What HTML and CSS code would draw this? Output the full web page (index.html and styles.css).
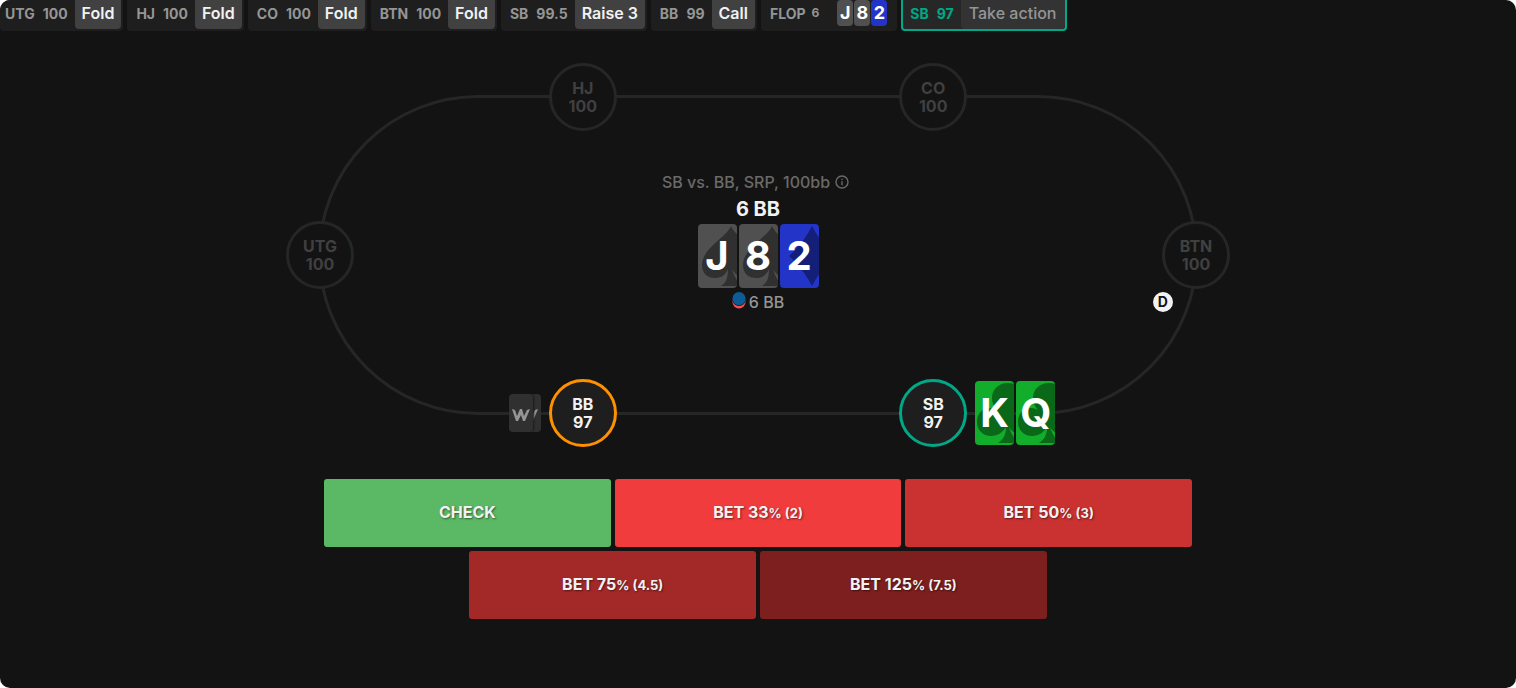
FILE: index.html
```html
<!DOCTYPE html>
<html lang="en">
<head>
<meta charset="utf-8">
<title>Poker trainer</title>
<link rel="stylesheet" href="styles.css">
</head>
<body>
<svg class="symbols" aria-hidden="true">
  <symbol id="spade" viewBox="0 0 39 64" preserveAspectRatio="none">
    <path d="M33 2C29 13 4 24 4 41C4 50 10 54 17 54C24 54 28 50 30 45C30 54 28 59 23 62H45C39 58 36 52 34 45C37 50 41 54 48 54C56 54 62 50 62 41C62 24 37 13 33 2Z"/>
  </symbol>
  <symbol id="diamond" viewBox="0 0 39 64" preserveAspectRatio="none">
    <path d="M32 2C26 14 17 25 9 32C17 39 26 50 32 62C38 50 47 39 55 32C47 25 38 14 32 2Z"/>
  </symbol>
  <symbol id="club" viewBox="0 0 39 64" preserveAspectRatio="none">
    <path d="M33 2C23 2 17 9 17 17C17 22 19 26 22 29C20 28 18 27 15 27C7 27 2 33 2 41C2 49 8 55 16 55C23 55 28 51 31 46C31 54 28 59 23 62H44C39 58 36 52 34 46C37 51 43 55 50 55C58 55 64 49 64 41C64 33 58 27 51 27C48 27 46 28 44 29C47 26 49 22 49 17C49 9 43 2 33 2Z"/>
  </symbol>
  <symbol id="logo" viewBox="0 0 18 12">
    <path d="M0 0L3 1L5 7L8 0H10L12 7L15 1L18 0L13 12H11L9 6L6 12H4Z"/>
  </symbol>
</svg>
<main class="app">
  <nav class="history" aria-label="Hand history">
    <div class="step step-first"><span class="pos">UTG</span><span class="stack">100</span><button class="act">Fold</button></div>
    <div class="step"><span class="pos">HJ</span><span class="stack">100</span><button class="act">Fold</button></div>
    <div class="step"><span class="pos">CO</span><span class="stack">100</span><button class="act">Fold</button></div>
    <div class="step"><span class="pos">BTN</span><span class="stack">100</span><button class="act">Fold</button></div>
    <div class="step"><span class="pos">SB</span><span class="stack">99.5</span><button class="act">Raise 3</button></div>
    <div class="step"><span class="pos">BB</span><span class="stack">99</span><button class="act">Call</button></div>
    <div class="step step-flop"><span class="pos">FLOP</span><span class="pot-size">6</span>
      <span class="mini-cards"><span class="mini">J</span><span class="mini">8</span><span class="mini mini-blue">2</span></span>
    </div>
    <div class="step step-active"><span class="pos">SB</span><span class="stack">97</span><button class="act">Take action</button></div>
  </nav>

  <section class="table" aria-label="Table">
    <div class="felt"></div>
    <div class="center">
      <p class="spot">SB vs. BB, SRP, 100bb
        <svg class="info" viewBox="0 0 14 14" aria-hidden="true"><circle cx="7" cy="7" r="6"/><path d="M7 6.3V10.2M7 3.8V5.1"/></svg>
      </p>
      <p class="pot">6 BB</p>
      <div class="cards">
        <div class="card gray"><svg class="suit" aria-hidden="true"><use href="#spade"/></svg><span class="rank">J</span></div>
        <div class="card gray"><svg class="suit" aria-hidden="true"><use href="#spade"/></svg><span class="rank">8</span></div>
        <div class="card blue"><svg class="suit" aria-hidden="true"><use href="#diamond"/></svg><span class="rank">2</span></div>
      </div>
      <p class="chips">
        <svg class="chip" viewBox="0 0 14 20" aria-hidden="true"><circle cx="7" cy="9.8" r="6.6" fill="#f9504f"/><circle cx="7" cy="7.2" r="6.8" fill="#131313"/><circle cx="7" cy="6.7" r="6.6" fill="#0d5c96"/></svg>
        6 BB
      </p>
    </div>
    <div class="seat hj">HJ<br>100</div>
    <div class="seat co">CO<br>100</div>
    <div class="seat utg">UTG<br>100</div>
    <div class="seat btn">BTN<br>100</div>
    <div class="seat bb">BB<br>97
      <div class="hidden-cards">
        <div class="back"><svg class="mark" aria-hidden="true"><use href="#logo"/></svg></div>
        <div class="back back-under"><svg class="mark" aria-hidden="true"><use href="#logo"/></svg></div>
      </div>
    </div>
    <div class="seat sb">SB<br>97
      <div class="cards hand">
        <div class="card green"><svg class="suit" aria-hidden="true"><use href="#club"/></svg><span class="rank">K</span></div>
        <div class="card green"><svg class="suit" aria-hidden="true"><use href="#club"/></svg><span class="rank">Q</span></div>
      </div>
    </div>
    <div class="dealer">D</div>
  </section>

  <section class="actions" aria-label="Actions">
    <button class="bet check">CHECK</button>
    <button class="bet bet-33">BET 33<small>% (2)</small></button>
    <button class="bet bet-50">BET 50<small>% (3)</small></button>
    <button class="bet bet-75">BET 75<small>% (4.5)</small></button>
    <button class="bet bet-125">BET 125<small>% (7.5)</small></button>
  </section>
</main>
</body>
</html>
```
FILE: styles.css
```css
* { box-sizing: border-box; }
html { background: #fff; }
body { margin: 0; font-family: Inter, "Liberation Sans", sans-serif; color: #f2f2f2; }
p { margin: 0; }
button { font-family: inherit; border: 0; margin: 0; cursor: pointer; }
.symbols { position: absolute; width: 0; height: 0; }

.app {
  min-height: 100vh;
  background: #131313;
  border-radius: 10px;
  overflow: hidden;
}

/* Hand history */
.history { display: flex; gap: 4px; align-items: flex-start; }
.step {
  display: flex;
  align-items: center;
  height: 31px;
  padding: 0 2px 2px 9px;
  background: #1e1e1e;
  border-radius: 0 0 4px 4px;
  color: #959595;
  font-size: 14px;
  font-weight: 700;
  line-height: 18px;
  white-space: nowrap;
}
.step-first { padding-left: 5px; }
.pos, .stack { padding-bottom: 2px; }
.pos { margin-right: 8px; }
.stack { margin-right: 7px; }
.act {
  height: 29px;
  padding: 0 7px 3px;
  border-radius: 0 0 4px 4px;
  background: #414141;
  color: #f2f2f2;
  font-size: 16px;
  font-weight: 600;
}
.step-flop { padding-right: 10px; }
.step-flop .pos { margin-right: 6px; }
.pot-size { font-size: 12px; padding-bottom: 4px; }
.mini-cards { display: flex; gap: 1px; align-self: flex-start; margin-left: 18px; }
.mini {
  width: 16px;
  height: 26px;
  border-radius: 4px;
  background: #505050;
  color: #fff;
  font-size: 18px;
  font-weight: 700;
  line-height: 26px;
  text-align: center;
}
.mini-blue { background: #2334c8; }
.step-active {
  padding: 0 0 0 7px;
  border: 2px solid #00a887;
  border-top: 0;
  background: #272727;
  color: #00a887;
}
.step-active .act { background: #333; color: #959595; font-weight: 500; padding: 0 9px 3px 8px; }

/* Table */
.table {
  position: relative;
  display: flex;
  justify-content: center;
  align-items: center;
  width: 90%;
  max-width: 876px;
  min-height: 316px;
  margin: 66px auto;
  padding-bottom: 26px;
}
.felt { position: absolute; inset: -2px; border: 3px solid #262626; border-radius: 160px; }
.center { display: flex; flex-direction: column; align-items: center; }
.spot { display: flex; align-items: center; gap: 5px; padding-right: 5px; line-height: 24px; font-size: 16px; font-weight: 500; color: #6a6a6a; }
.info { width: 14px; height: 14px; fill: none; stroke: #6a6a6a; stroke-width: 1.4; }
.pot { margin: 1px 0; line-height: 28px; font-size: 20px; font-weight: 700; }
.cards { display: flex; gap: 2px; }
.card {
  position: relative;
  display: flex;
  align-items: center;
  justify-content: center;
  width: 39px;
  height: 64px;
  border-radius: 4px;
  overflow: hidden;
  color: #fff;
  font-size: 40px;
  font-weight: 700;
  line-height: 64px;
}
.suit { position: absolute; inset: 0; width: 100%; height: 100%; }
.rank { position: relative; }
.gray { background: #505050; fill: #303030; }
.blue { background: #2334c8; fill: #141f78; }
.green { background: #12ad2b; fill: #0a6819; }
.chips { display: flex; align-items: center; gap: 3px; margin-top: 2px; line-height: 24px; font-size: 16px; font-weight: 500; color: #959595; }
.chip { width: 14px; height: 20px; }

/* Seats sit on the outline of the table */
.seat {
  position: absolute;
  width: 68px;
  height: 68px;
  margin: -34px;
  padding-top: 13px;
  border: 3px solid #262626;
  border-radius: 50%;
  background: #131313;
  color: #404040;
  font-size: 16px;
  font-weight: 700;
  line-height: 18px;
  text-align: center;
}
.hj { left: 30%; top: 0; }
.co { left: 70%; top: 0; }
.utg { left: 0; top: 50%; }
.btn { left: 100%; top: 50%; }
.bb, .sb { top: 100%; background: #1e1e1e; color: #f2f2f2; }
.bb { left: 30%; border-color: #ff9000; }
.sb { left: 70%; border-color: #00a887; }
.hand { position: absolute; left: 73px; top: -1px; }
.hidden-cards { position: absolute; right: 73px; top: 12px; display: flex; }
.back {
  position: relative;
  z-index: 1;
  display: flex;
  align-items: center;
  justify-content: center;
  width: 24px;
  height: 38px;
  border-radius: 4px;
  background: #303030;
  box-shadow: 1px 0 2px #1a1a1a;
  fill: #959595;
}
.back-under { z-index: 0; margin-left: -16px; box-shadow: none; }
.mark { width: 18px; height: 12px; margin-top: 4px; }
.dealer {
  position: absolute;
  left: 96.2%;
  top: 65%;
  width: 20px;
  height: 20px;
  margin: -10px;
  border-radius: 50%;
  background: #f2f2f2;
  color: #131313;
  font-size: 14px;
  font-weight: 700;
  line-height: 20px;
  text-align: center;
}

/* Actions */
.actions {
  display: flex;
  flex-wrap: wrap;
  justify-content: center;
  gap: 4px;
  width: 90%;
  max-width: 868px;
  margin: 0 auto;
}
.bet {
  width: calc((100% - 8px) / 3);
  height: 68px;
  padding: 0 0 2px;
  border-radius: 3px;
  color: #f2f2f2;
  font-size: 16px;
  font-weight: 700;
  text-shadow: 1px 1px 2px rgba(0, 0, 0, 0.5);
}
.bet small { font-size: 13px; }
.check { background: #5bb966; }
.bet-33 { background: #f13c3d; }
.bet-50 { background: #ca3131; }
.bet-75 { background: #a32929; }
.bet-125 { background: #7d1f1f; }
```
